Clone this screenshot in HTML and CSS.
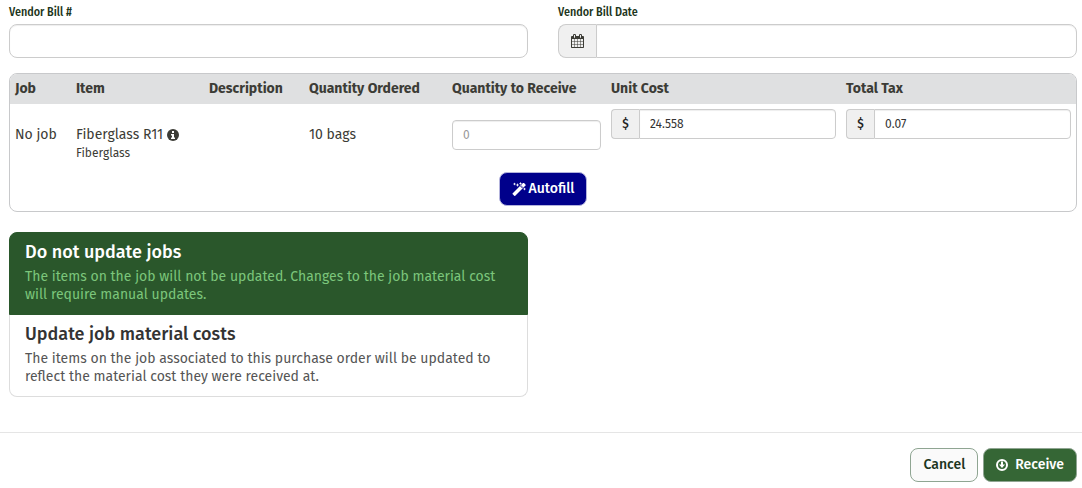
FILE: index.html
```html
<!DOCTYPE html>
<html lang="en">
<head>
<meta charset="utf-8">
<title>Receive purchase order</title>
<link rel="stylesheet" href="styles.css">
</head>
<body>
<form class="receive">
  <div class="fields">
    <div class="field">
      <label class="field-label" for="bill-number">Vendor Bill #</label>
      <input class="control" id="bill-number" type="text">
    </div>
    <div class="field">
      <label class="field-label" for="bill-date">Vendor Bill Date</label>
      <div class="group">
        <span class="addon">
          <svg class="icon" width="13" height="14" viewBox="0 0 1664 1792" aria-hidden="true"><path fill="currentColor" d="M128 1664h288v-288h-288v288zM480 1664h320v-288h-320v288zM128 1312h288v-320h-288v320zM480 1312h320v-320h-320v320zM128 928h288v-288h-288v288zM864 1664h320v-288h-320v288zM480 928h320v-288h-320v288zM1248 1664h288v-288h-288v288zM864 1312h320v-320h-320v320zM512 448v-288q0-13-9.500-22.500t-22.500-9.500h-64q-13 0-22.500 9.500t-9.500 22.500v288q0 13 9.500 22.500t22.500 9.500h64q13 0 22.500-9.500t9.500-22.500zM1248 1312h288v-320h-288v320zM864 928h320v-288h-320v288zM1248 928h288v-288h-288v288zM1280 448v-288q0-13-9.500-22.500t-22.500-9.500h-64q-13 0-22.500 9.500t-9.500 22.500v288q0 13 9.500 22.500t22.500 9.500h64q13 0 22.500-9.500t9.500-22.500zM1664 384v1280q0 52-38 90t-90 38h-1408q-52 0-90-38t-38-90v-1280q0-52 38-90t90-38h128v-96q0-66 47-113t113-47h64q66 0 113 47t47 113v96h384v-96q0-66 47-113t113-47h64q66 0 113 47t47 113v96h128q52 0 90 38t38 90z"/></svg>
        </span>
        <input class="control" id="bill-date" type="text">
      </div>
    </div>
  </div>

  <div class="panel">
    <table class="items">
      <colgroup>
        <col class="col-job"><col class="col-item"><col class="col-description"><col class="col-ordered"><col class="col-receive"><col><col>
      </colgroup>
      <thead>
        <tr><th>Job</th><th>Item</th><th>Description</th><th>Quantity Ordered</th><th>Quantity to Receive</th><th>Unit Cost</th><th>Total Tax</th></tr>
      </thead>
      <tbody>
        <tr>
          <td class="text-cell">No job</td>
          <td class="text-cell">
            <div class="item-name">Fiberglass R11
              <svg class="icon" width="12" height="12" viewBox="0 0 24 24" aria-hidden="true"><circle cx="12" cy="12" r="12" fill="currentColor"/><path fill="#fff" d="M10 4h4v4h-4zM8 10h6v7h2v3H8v-3h2v-4H8z"/></svg>
            </div>
            <div class="item-note">Fiberglass</div>
          </td>
          <td></td>
          <td class="text-cell">10 bags</td>
          <td class="quantity-cell"><input class="control small" type="text" placeholder="0" aria-label="Quantity to Receive"></td>
          <td><div class="group small"><span class="addon">$</span><input class="control" type="text" value="24.558" aria-label="Unit Cost"></div></td>
          <td><div class="group small"><span class="addon">$</span><input class="control" type="text" value="0.07" aria-label="Total Tax"></div></td>
        </tr>
      </tbody>
    </table>
    <div class="panel-actions">
      <button class="button autofill" type="button">
        <svg class="icon" width="14" height="14" viewBox="0 0 28 28" aria-hidden="true"><path fill="currentColor" d="M1 23 18 6l5 5L6 28H5l-4-4z"/><path fill="currentColor" d="m18 6 4-4h2l3 3v2l-4 4z"/><path stroke="#00008b" stroke-width="2" d="m17 8 4 4"/><path fill="currentColor" d="m5 1 1 2 2 1-2 1-1 2-1-2-2-1 2-1zM11 2l1 3 3 1-3 1-1 3-1-3-3-1 3-1zM17 0l1 2 2 1-2 1-1 2-1-2-2-1 2-1zM25 11l1 2 2 1-2 1-1 2-1-2-2-1 2-1z"/></svg>
        Autofill
      </button>
    </div>
  </div>

  <div class="options">
    <button class="option selected" type="button" aria-pressed="true">
      <span class="option-title">Do not update jobs</span>
      <span class="option-text">The items on the job will not be updated. Changes to the job material cost will require manual updates.</span>
    </button>
    <button class="option" type="button" aria-pressed="false">
      <span class="option-title">Update job material costs</span>
      <span class="option-text">The items on the job associated to this purchase order will be updated to reflect the material cost they were received at.</span>
    </button>
  </div>

  <div class="footer">
    <button class="button cancel" type="button">Cancel</button>
    <button class="button submit" type="submit">
      <svg class="icon" width="12" height="12" viewBox="0 0 24 24" fill="none" stroke="currentColor" stroke-width="4" aria-hidden="true"><circle cx="12" cy="12" r="10"/><path fill="currentColor" stroke="none" d="M10 5h4v6h4l-6 7-6-7h4z"/></svg>
      Receive
    </button>
  </div>
</form>
</body>
</html>
```
FILE: styles.css
```css
* { box-sizing: border-box; }

body {
  margin: 0;
  background: #fff;
  color: #3c3c36;
  font: 14px/20px "Fira Sans", Roboto, sans-serif;
}

button, input { font: inherit; }

.icon { flex: none; }

.fields {
  display: grid;
  grid-template-columns: 1fr 1fr;
  gap: 30px;
  padding: 4px 5px 0 9px;
}

.field-label {
  display: block;
  margin-bottom: 4px;
  color: #1c3520;
  font-family: "Fira Sans Condensed", "Fira Sans", Roboto, sans-serif;
  font-size: 12px;
  font-weight: 500;
  line-height: 16px;
}

.control {
  display: block;
  width: 100%;
  min-width: 0;
  height: 34px;
  padding: 0 10px;
  border: 1px solid #ccc;
  border-radius: 8px;
  background: #fff;
  color: #333;
  box-shadow: inset 0 1px 1px rgba(0, 0, 0, .07);
}

.control::placeholder { color: #999; }

.group { display: flex; }

.group .control {
  flex: 1;
  border-radius: 0 8px 8px 0;
}

.addon {
  display: flex;
  align-items: center;
  justify-content: center;
  width: 38px;
  border: 1px solid #ccc;
  border-right: 0;
  border-radius: 8px 0 0 8px;
  background: #f0f0f0;
}

.control.small, .small .control {
  height: 30px;
  border-radius: 4px;
  font-size: 12px;
}

.small .control { border-radius: 0 4px 4px 0; }

.small .addon {
  width: 28px;
  border-radius: 4px 0 0 4px;
  color: #222;
  font-size: 12px;
  font-weight: 500;
}

.panel {
  margin: 15px 5px 20px 9px;
  overflow: hidden;
  border: 1px solid #c8c9cb;
  border-radius: 8px;
}

.items {
  width: 100%;
  border-collapse: collapse;
  table-layout: fixed;
}

.col-job { width: 61px; }
.col-item { width: 133px; }
.col-description { width: 100px; }
.col-ordered { width: 143px; }
.col-receive { width: 159px; }

.items th {
  padding: 5px;
  background: #dfe0e1;
  font-weight: 700;
  text-align: left;
  white-space: nowrap;
}

.items td {
  padding: 5px;
  vertical-align: top;
}

.items .text-cell { padding-top: 21px; }
.items .quantity-cell { padding-top: 16px; }

.item-name {
  display: flex;
  align-items: center;
  gap: 4px;
  white-space: nowrap;
}

.item-note {
  font-size: 12px;
  line-height: 16px;
}

.panel-actions {
  display: flex;
  justify-content: center;
  padding: 6px 0 5px;
}

.button {
  display: flex;
  align-items: center;
  height: 34px;
  padding: 0 12px;
  border: 1px solid #8fa592;
  border-radius: 8px;
  font-weight: 500;
}

.autofill {
  gap: 3px;
  border-color: #b3b3dc;
  background: #00008b;
  color: #fff;
}

.options {
  display: flex;
  flex-direction: column;
  width: calc(50% - 22px);
  margin-left: 9px;
}

.option {
  padding: 9px 15px 10px;
  border: 1px solid #ddd;
  border-top: 0;
  border-radius: 0 0 8px 8px;
  background: #fff;
  color: #555;
  text-align: left;
}

.option.selected {
  border: 1px solid #2a572b;
  border-radius: 8px 8px 0 0;
  background: #2a572b;
  color: #7cc67b;
}

.option-title {
  display: block;
  margin-bottom: 6px;
  color: #333;
  font-size: 18px;
  font-weight: 500;
  line-height: 20px;
}

.selected .option-title { color: #fff; }

.option-text {
  display: block;
  line-height: 18px;
}

.footer {
  display: flex;
  justify-content: flex-end;
  gap: 5px;
  margin-top: 35px;
  padding: 15px 5px 6px;
  border-top: 1px solid #e5e5e5;
}

.cancel {
  background: #fafafa;
  color: #1c3520;
}

.submit {
  gap: 7px;
  background: #356635;
  color: #fff;
}
```
